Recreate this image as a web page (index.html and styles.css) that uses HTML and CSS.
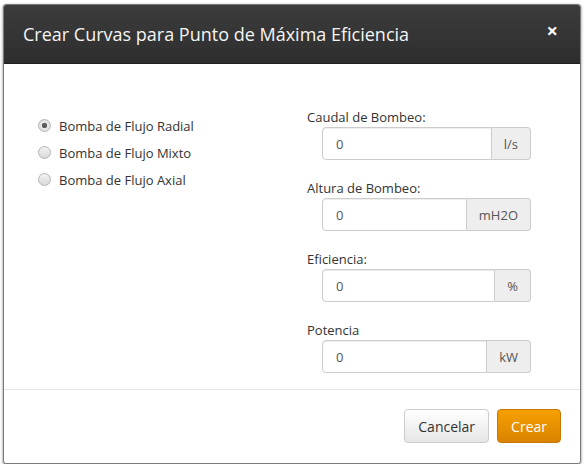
FILE: index.html
```html
<!DOCTYPE html>
<html lang="es">
<head>
    <meta charset="UTF-8">
    <meta name="viewport" content="width=device-width, initial-scale=1.0">
    <link rel="stylesheet" href="styles.css">
</head>
<body>
    <div class="modal">
        <div class="modal-header">
            <h4 class="modal-title">Crear Curvas para Punto de Máxima Eficiencia</h4>
            <span class="close">&times;</span>
        </div>
        <div class="modal-body">
            <div class="col-left">
                <label class="radio-label"><input type="radio" name="tipo_bomba" value="radial" checked> Bomba de Flujo Radial</label>
                <label class="radio-label"><input type="radio" name="tipo_bomba" value="mixto"> Bomba de Flujo Mixto</label>
                <label class="radio-label"><input type="radio" name="tipo_bomba" value="axial"> Bomba de Flujo Axial</label>
            </div>
            <div class="col-right">
                <div class="form-group">
                    <label class="field-label">Caudal de Bombeo:</label>
                    <div class="input-group">
                        <input type="text" class="form-control" value="0">
                        <span class="addon">l/s</span>
                    </div>
                </div>
                <div class="form-group">
                    <label class="field-label">Altura de Bombeo:</label>
                    <div class="input-group">
                        <input type="text" class="form-control" value="0">
                        <span class="addon">mH2O</span>
                    </div>
                </div>
                <div class="form-group">
                    <label class="field-label">Eficiencia:</label>
                    <div class="input-group">
                        <input type="text" class="form-control" value="0">
                        <span class="addon">%</span>
                    </div>
                </div>
                <div class="form-group">
                    <label class="field-label">Potencia</label>
                    <div class="input-group">
                        <input type="text" class="form-control" value="0">
                        <span class="addon">kW</span>
                    </div>
                </div>
            </div>
        </div>
        <div class="modal-footer">
            <button type="button" class="btn btn-default">Cancelar</button>
            <button type="button" class="btn btn-warning">Crear</button>
        </div>
    </div>
</body>
</html>
```

FILE: styles.css
```css
body {
    margin: 0;
    padding: 4px 3px 0 3px;
    background-color: #ffffff;
    font-family: "Open Sans", Arial, sans-serif;
    color: #333333;
}
.modal {
    width: 576px;
    height: 458px;
    border: 1px solid #7a7a7a;
    border-radius: 3px;
    box-shadow: 0 1px 3px rgba(0, 0, 0, 0.5);
    background-color: #ffffff;
    display: flex;
    flex-direction: column;
    overflow: hidden;
}
.modal-header {
    flex: none;
    height: 59px;
    background: linear-gradient(#3c3c3c, #2e2e2e);
    border-bottom: 1px solid #1e1e1e;
    display: flex;
    align-items: center;
    justify-content: space-between;
    padding: 0 22px 0 19px;
    box-sizing: border-box;
}
.modal-title {
    margin: 0;
    font-size: 18px;
    font-weight: normal;
    color: #f4f4f4;
}
.close {
    color: #ffffff;
    font-size: 20px;
    font-weight: bold;
    line-height: 1;
    margin-top: -6px;
}
.modal-body {
    flex: 1;
    display: flex;
    padding: 44px 49px 0 33px;
    border-bottom: 1px solid #e5e5e5;
}
.col-left {
    flex: none;
    width: 270px;
    padding-top: 4px;
}
.radio-label {
    display: flex;
    align-items: center;
    height: 27px;
    font-size: 13px;
    color: #333333;
}
.radio-label input {
    appearance: none;
    -webkit-appearance: none;
    margin: 0 8px 0 1px;
    width: 13px;
    height: 13px;
    border: 1px solid #b5b5b5;
    border-radius: 50%;
    background: linear-gradient(#f2f2f2, #d8d8d8);
    box-sizing: border-box;
}
.radio-label input:checked {
    background: radial-gradient(circle, #555555 0, #666666 2.5px, #e6e6e6 3px, #dddddd 100%);
}
.col-right {
    flex: 1;
    min-width: 0;
}
.form-group {
    margin-bottom: 19px;
}
.form-group:last-child {
    margin-bottom: 0;
}
.field-label {
    display: block;
    font-size: 13px;
    line-height: 18px;
    height: 19px;
}
.input-group {
    display: flex;
    margin-left: 15px;
    height: 33px;
}
.form-control {
    flex: 1;
    min-width: 0;
    border: 1px solid #cccccc;
    border-radius: 4px 0 0 4px;
    padding: 0 13px;
    font-family: "Open Sans", Arial, sans-serif;
    font-size: 13px;
    color: #555555;
    box-shadow: inset 0 1px 1px rgba(0, 0, 0, 0.075);
}
.addon {
    display: flex;
    align-items: center;
    padding: 0 12px;
    background-color: #eeeeee;
    border: 1px solid #cccccc;
    border-left: none;
    border-radius: 0 4px 4px 0;
    font-size: 13px;
    color: #555555;
}
.modal-footer {
    flex: none;
    display: flex;
    justify-content: flex-end;
    gap: 8px;
    padding: 19px 19px 20px 19px;
}
.btn {
    height: 34px;
    border-radius: 4px;
    font-family: "Open Sans", Arial, sans-serif;
    font-size: 14px;
    padding: 0 13px;
    cursor: pointer;
}
.btn-default {
    background: linear-gradient(#ffffff, #e6e6e6);
    border: 1px solid #cccccc;
    color: #333333;
}
.btn-warning {
    background: linear-gradient(#f7a000, #d98300);
    border: 1px solid #c77700;
    color: #ffffff;
}
```
